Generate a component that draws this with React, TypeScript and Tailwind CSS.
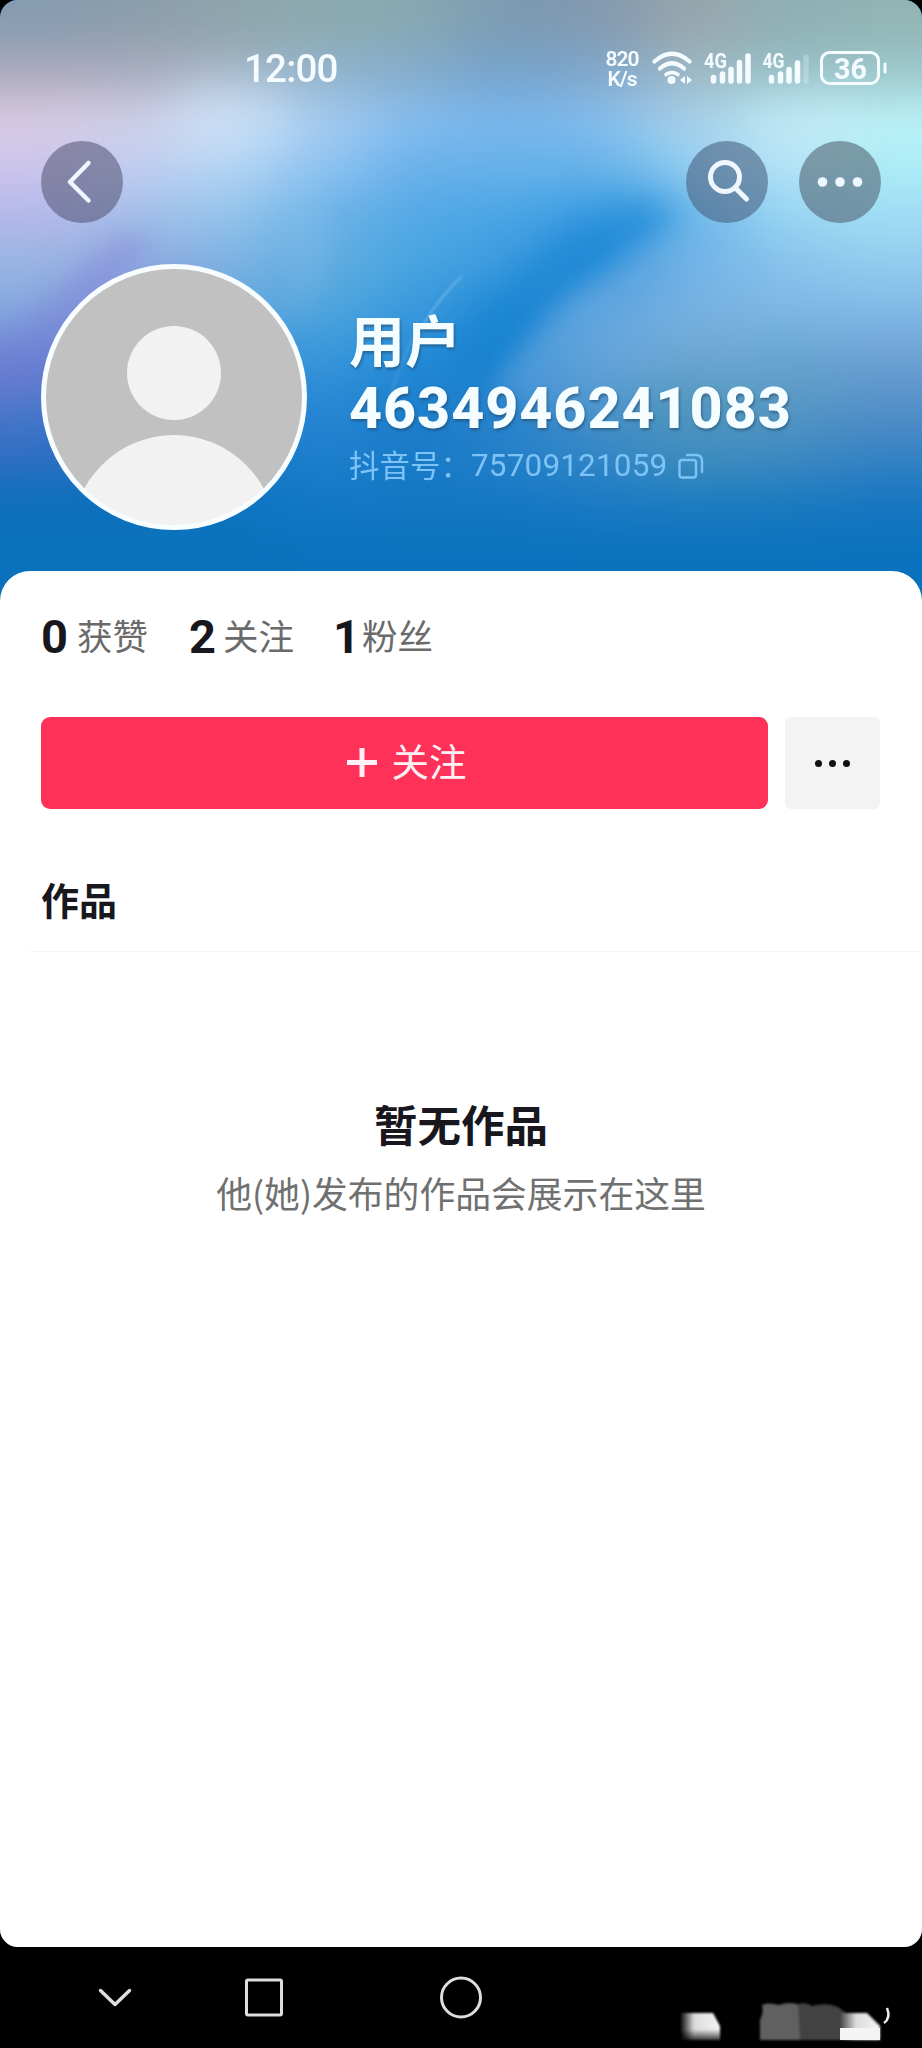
type StatProps = {
  value: string;
  label: string;
  className: string;
  labelClassName: string;
};

// cover colours, row by row, softened into each other by the blur below
const coverColors = [
  ["#869cb0", "#8c9eac", "#8ea4ac", "#8caab0", "#88a8b2", "#7c9ab2", "#8299b0", "#98a6ac", "#8fb0b4", "#93b4b4"],
  ["#aca9be", "#aaabbf", "#a6b6c6", "#92b4cc", "#84accc", "#73a2cc", "#80a8cc", "#a0b8c4", "#98c0c8", "#9cc8cc"],
  ["#d8cce4", "#d0d0e8", "#c8dcf2", "#a6ccf0", "#84bcee", "#78b6ec", "#84bcec", "#a8d2ea", "#b8e6f2", "#bcf2f8"],
  ["#ccc4ec", "#c0cef0", "#b4d6f4", "#90c4f2", "#68b0ea", "#66b2ea", "#64b2ea", "#98d0f2", "#b4e2f6", "#acecf6"],
  ["#b4b8ea", "#a2bee9", "#94c4ec", "#6cb2e6", "#52a8e6", "#4aa4e4", "#3c9ee4", "#70bcec", "#98d4f2", "#a0dcf4"],
  ["#98b4e2", "#90a8de", "#7cb2e2", "#62aee0", "#48a4e0", "#3c9cde", "#2e92dc", "#74b6e8", "#8ac2ec", "#92ccee"],
  ["#84a6de", "#7c90d8", "#62a6de", "#4ea4de", "#3898dc", "#228ad6", "#5aa2de", "#7ab2e0", "#7cb6e4", "#80b8e6"],
  ["#6c88d4", "#5878cc", "#3c8cd6", "#3898da", "#228ad8", "#2484d0", "#62a2d8", "#6ea6d0", "#68a4ce", "#6c9fd2"],
  ["#4c78ca", "#3070c4", "#207cd0", "#2888d4", "#1c7ecc", "#2c84cc", "#4a92ca", "#5096bc", "#5698c2", "#5490c8"],
  ["#306ec2", "#186cc0", "#1478c8", "#1e80ce", "#187ac8", "#2480c8", "#3486c6", "#408ebe", "#3f8ac2", "#3682c4"],
  ["#0c70bc", "#0c70bc", "#0c74c0", "#1278c6", "#1478c4", "#1478c4", "#1a7ac4", "#1c7cc0", "#1a7abe", "#1676c0"],
  ["#0a72bc", "#0a72bc", "#0a72bc", "#0a72be", "#0a72be", "#0a72be", "#0a72be", "#0a72be", "#0a72be", "#0a72be"],
];

function Cover() {
  return (
    <svg aria-hidden="true" className="absolute inset-0 h-full w-full" viewBox="0 0 922 571">
      <defs>
        <filter id="mesh" x="-20%" y="-20%" width="140%" height="140%" colorInterpolationFilters="sRGB">
          <feGaussianBlur stdDeviation="38 22" />
        </filter>
        <filter id="wide" x="-80%" y="-80%" width="260%" height="260%" colorInterpolationFilters="sRGB">
          <feGaussianBlur stdDeviation="24" />
        </filter>
        <filter id="soft" x="-50%" y="-50%" width="200%" height="200%" colorInterpolationFilters="sRGB">
          <feGaussianBlur stdDeviation="12" />
        </filter>
        <filter id="fine" x="-50%" y="-50%" width="200%" height="200%" colorInterpolationFilters="sRGB">
          <feGaussianBlur stdDeviation="1.2" />
        </filter>
        <linearGradient id="wedge" x1="560" y1="290" x2="660" y2="390" gradientUnits="userSpaceOnUse">
          <stop offset="0" stopColor="#74b0e4" stopOpacity="0.55" />
          <stop offset="1" stopColor="#74b0e4" stopOpacity="0" />
        </linearGradient>
      </defs>
      <rect width="922" height="571" fill="#0a72bc" />
      <g filter="url(#mesh)">
        {coverColors.map((row, y) =>
          row.map((color, x) => (
            <rect
              key={`${x}-${y}`}
              x={x === 0 ? -120 : x * 92.2}
              y={y === 0 ? -80 : y * 48}
              width={x === 0 || x === 9 ? 213 : 93}
              height={y === 0 ? 129 : y === 11 ? 150 : 49}
              fill={color}
            />
          )),
        )}
      </g>
      <g filter="url(#wide)">
        <ellipse cx="228" cy="115" rx="62" ry="28" fill="#d2e8fe" opacity="0.45" />
        <ellipse cx="805" cy="125" rx="60" ry="24" fill="#cceefa" opacity="0.5" />
        <path d="M450 400 C475 310 540 240 650 190 L690 212 C590 260 540 310 500 385Z" fill="#0c7cd0" opacity="0.5" />
      </g>
      <g filter="url(#soft)">
        <path d="M-20 355 Q50 300 120 232 L155 240 Q90 305 40 390 L-20 410Z" fill="#7464d0" opacity="0.24" />
        <path d="M435 385 C465 330 520 255 640 205 L680 216 C590 262 535 310 492 380Z" fill="#1484d4" opacity="0.36" />
        <path d="M300 150 L335 240 L300 330 L285 240Z" fill="#8cc4ec" opacity="0.2" />
      </g>
      <g filter="url(#soft)">
        <path d="M492 390 C540 320 600 260 735 215 L800 330 L640 440Z" fill="url(#wedge)" />
      </g>
      <path d="M462 276 Q440 297 424 323" fill="none" stroke="#7cbcea" strokeWidth="2.500" opacity="0.55" filter="url(#fine)" />
      <path d="M424 323 Q400 355 390 400" fill="none" stroke="#7cbcea" strokeWidth="4" opacity="0.15" filter="url(#fine)" />
    </svg>
  );
}

function StatusBar() {
  return (
    <div className="flex h-[137px] items-start pl-[244px] text-[#f4fcff]">
      <span className="mt-[49px] w-[359px] font-['Roboto'] text-[38.5px] font-medium leading-[40px] tracking-[-0.8px]">12:00</span>
      <p className="mt-[49px] w-[38px] text-center font-['Roboto'] text-[21px] font-semibold leading-[20px] tracking-[-1px]">820 K/s</p>
      <svg aria-hidden="true" className="mt-[48px] ml-[8px] h-[40px] w-[248px]" viewBox="649 48 248 40" fill="none">
        <g stroke="currentColor" strokeWidth="4.200" strokeLinecap="round">
          <path d="M654.500 61.500 Q672 46 689.500 61.500" />
          <path d="M660 68.500 Q672 58 684 68.500" />
          <path d="M666 74.500 Q672 70.500 678 74.500" strokeWidth="3.600" />
        </g>
        <circle cx="671.500" cy="80" r="4" fill="currentColor" />
        <path d="M685 76 L680 80 L685 84Z M687 76 L692 80 L687 84Z" fill="currentColor" />
        <text x="704" y="67.500" fill="currentColor" fontFamily="Roboto" fontSize="20" fontWeight="700" textLength="23" lengthAdjust="spacingAndGlyphs">4G</text>
        <text x="762.500" y="67.500" fill="currentColor" fontFamily="Roboto" fontSize="20" fontWeight="700" textLength="22" lengthAdjust="spacingAndGlyphs">4G</text>
        <g stroke="currentColor" strokeWidth="5.500" strokeLinecap="round">
          <path d="M713.500 77.500V81 M722.500 74V81 M731 69.500V81 M739.500 62.500V81 M748 56V81" />
          <path d="M771.500 77.500V81 M780.500 74V81 M789 69.500V81 M797.500 63V81" />
          <path d="M806 57V81" opacity="0.25" />
        </g>
        <rect x="821.500" y="52.500" width="57" height="31" rx="8" stroke="currentColor" strokeWidth="3" />
        <path d="M885 64V72" stroke="currentColor" strokeWidth="3" strokeLinecap="round" />
        <text x="834" y="78.500" fill="currentColor" fontFamily="Roboto" fontSize="29" fontWeight="700" textLength="33" lengthAdjust="spacingAndGlyphs">36</text>
      </svg>
    </div>
  );
}

function TopActions() {
  return (
    <div className="flex h-[90px] items-center px-[41px] text-[#eef6ff]">
      <button className="flex size-[82px] items-center justify-center rounded-full bg-[#505070]/55" type="button">
        <svg className="size-[82px]" viewBox="0 0 82 82" fill="none" stroke="currentColor" strokeWidth="4.500" strokeLinecap="round" strokeLinejoin="round">
          <path d="M47.500 22 L29 41 L47.500 59.500" />
        </svg>
      </button>
      <button className="ml-auto size-[82px] rounded-full bg-[#4a6080]/60" type="button">
        <svg className="size-[82px]" viewBox="0 0 82 82" fill="none" stroke="currentColor" strokeLinecap="round">
          <circle cx="39" cy="36" r="14.500" strokeWidth="5" />
          <path d="M49.500 47 L60.500 58" strokeWidth="5" />
        </svg>
      </button>
      <button className="ml-[31px] size-[82px] rounded-full bg-[#4a5a68]/55" type="button">
        <svg className="size-[82px]" viewBox="0 0 82 82" fill="currentColor">
          <circle cx="23.500" cy="41" r="4.800" />
          <circle cx="41" cy="41" r="4.800" />
          <circle cx="58.500" cy="41" r="4.800" />
        </svg>
      </button>
    </div>
  );
}

function Avatar() {
  return (
    <svg aria-hidden="true" className="size-[266px] shrink-0" viewBox="0 0 266 266">
      <clipPath id="avatar">
        <circle cx="133" cy="133" r="129" />
      </clipPath>
      <circle cx="133" cy="133" r="129" fill="#c1c1c1" />
      <g clipPath="url(#avatar)" fill="#f2f2f2">
        <circle cx="133" cy="109" r="47" />
        <circle cx="133" cy="273" r="102" />
      </g>
      <circle cx="133" cy="133" r="130.500" fill="none" stroke="#f8fdff" strokeWidth="5" />
    </svg>
  );
}

function Stat({ value, label, className, labelClassName }: StatProps) {
  return (
    <div className={`flex items-center ${className}`}>
      <span className="font-['Roboto'] text-[47px] font-bold leading-[50px] text-[#17171d]">{value}</span>
      <span className={`relative -top-[2px] text-[35.5px] leading-[50px] text-[#6a6a6a] ${labelClassName}`}>{label}</span>
    </div>
  );
}

function NavBar() {
  return (
    <footer className="relative h-[101px]">
      <div className="flex h-full items-center pl-[98px] text-[#dedede]">
        <svg className="h-[44px] w-[34px]" viewBox="0 0 34 44" fill="none" stroke="currentColor" strokeWidth="3.500" strokeLinecap="round" strokeLinejoin="round">
          <path d="M2.500 14.500 L17 28.500 L31.500 14.500" />
        </svg>
        <svg className="ml-[112px] size-[40px]" viewBox="0 0 40 40" fill="none" stroke="currentColor" strokeWidth="3">
          <rect x="2.500" y="2" width="35" height="35" rx="1.500" />
        </svg>
        <svg className="ml-[155px] size-[44px]" viewBox="0 0 44 44" fill="none" stroke="currentColor" strokeWidth="3">
          <circle cx="22" cy="21.500" r="19.500" />
        </svg>
      </div>
      <svg aria-hidden="true" className="absolute right-0 bottom-0 h-[60px] w-[262px]" viewBox="660 1988 262 60">
        <defs>
          <linearGradient id="patch" x1="0" x2="1">
            <stop offset="0" stopColor="#000" />
            <stop offset="0.35" stopColor="#dcdcdc" />
            <stop offset="1" stopColor="#f4f4f4" />
          </linearGradient>
          <linearGradient id="patchSide" x1="0" x2="1">
            <stop offset="0" stopColor="#424242" />
            <stop offset="0.4" stopColor="#dcdcdc" />
            <stop offset="1" stopColor="#f4f4f4" />
          </linearGradient>
          <linearGradient id="patchFade" x1="0" x2="0" y1="0" y2="1">
            <stop offset="0.6" stopColor="#000" stopOpacity="0" />
            <stop offset="1" stopColor="#000" stopOpacity="0.75" />
          </linearGradient>
          <filter id="patchBlur">
            <feGaussianBlur stdDeviation="0.8" />
          </filter>
        </defs>
        <g filter="url(#patchBlur)">
          <path d="M680 2013H713L720 2026V2040H680Z" fill="url(#patch)" />
          <path d="M680 2013H713L720 2026V2040H680Z" fill="url(#patchFade)" />
          <path d="M762 2005Q768 2002 779 2005Q790 2001 800 2005V2040H760V2020Q764 2013 762 2005Z" fill="#606060" />
          <path d="M798 2004Q807 2002 812 2006Q827 2002 838 2007L846 2013V2040H800Z" fill="#424242" />
          <path d="M840 2013H867L880 2026V2040H840Z" fill="url(#patchSide)" />
        </g>
        <path d="M840 2028H880V2040H840Z" fill="#f4f4f4" />
        <path d="M887 2008Q891 2018 884 2023" fill="none" stroke="#eee" strokeWidth="2.500" />
      </svg>
    </footer>
  );
}

export default function App() {
  return (
    <main className="flex h-[2048px] w-[922px] flex-col overflow-hidden bg-black font-['Noto_Sans_CJK_SC',sans-serif]">
      <div className="relative flex h-[1947px] shrink-0 flex-col overflow-hidden rounded-[18px] bg-[#0a72bc]">
        <header className="relative h-[571px] shrink-0">
          <Cover />
          <div className="relative">
            <StatusBar />
            <TopActions />
            <div className="flex px-[41px] pt-[37px]">
              <Avatar />
              <div className="ml-[42px] pt-[41px]">
                <h1 className="font-bold text-[#f4fdff] [text-shadow:1px_2px_3px_rgba(30,60,90,0.55)]">
                  <span className="block text-[56px] leading-[66px]">用户</span>
                  <span className="mt-[5px] block font-['Roboto'] text-[57.5px] font-extrabold leading-[66px] tracking-[0.9px]">4634946241083</span>
                </h1>
                <div className="flex h-[48px] items-center text-[30.5px] leading-[48px] text-[#7dc3f6]">
                  <span className="relative -top-[2px]">抖音号：</span>
                  <span className="font-['Roboto'] text-[31.5px] tracking-[0.15px]">75709121059</span>
                  <svg className="ml-[11px] size-[26px]" viewBox="0 0 26 26" fill="none" stroke="currentColor" strokeWidth="2.400" strokeLinecap="round">
                    <rect x="1.500" y="7" width="16.500" height="17.500" rx="2.500" />
                    <path d="M9 2H18Q24 2 24 8V19" />
                  </svg>
                </div>
              </div>
            </div>
          </div>
        </header>

        <section className="relative flex-1 rounded-t-[30px] bg-white">
          <div className="flex pt-[41px]">
            <Stat value="0" label="获赞" className="ml-[41px]" labelClassName="ml-[9px]" />
            <Stat value="2" label="关注" className="ml-[41px]" labelClassName="ml-[7px]" />
            <Stat value="1" label="粉丝" className="ml-[39px]" labelClassName="ml-[2px]" />
          </div>

          <div className="mt-[55px] flex gap-[17px] pl-[41px]">
            <button className="flex h-[92px] w-[727px] items-center justify-center gap-[14px] rounded-[9px] bg-[#fe3158] pl-[3px] text-[#fff0f5]" type="button">
              <svg className="size-[32px]" viewBox="0 0 32 32" stroke="currentColor" strokeWidth="5">
                <path d="M16 1V30 M1 15.500H31" />
              </svg>
              <span className="relative -top-[3px] text-[37.5px] leading-[50px]">关注</span>
            </button>
            <button className="flex h-[92px] w-[95px] items-center justify-center gap-[7px] rounded-[6px] bg-[#f3f3f3]" type="button">
              <span className="size-[7px] rounded-full bg-[#111]" />
              <span className="size-[7px] rounded-full bg-[#111]" />
              <span className="size-[7px] rounded-full bg-[#111]" />
            </button>
          </div>

          <div className="mt-[64px] ml-[30px] h-[79px] border-b border-[#f5f5f5] pl-[11px]">
            <h2 className="text-[38px] font-bold leading-[52px] text-[#17171d]">作品</h2>
          </div>

          <div className="mt-[142px] text-center">
            <p className="text-[43.5px] font-bold leading-[60px] text-[#17171d]">暂无作品</p>
            <p className="mt-[13px] text-[35.8px] leading-[50px] text-[#707070]">他(她)发布的作品会展示在这里</p>
          </div>
        </section>
      </div>
      <NavBar />
    </main>
  );
}
